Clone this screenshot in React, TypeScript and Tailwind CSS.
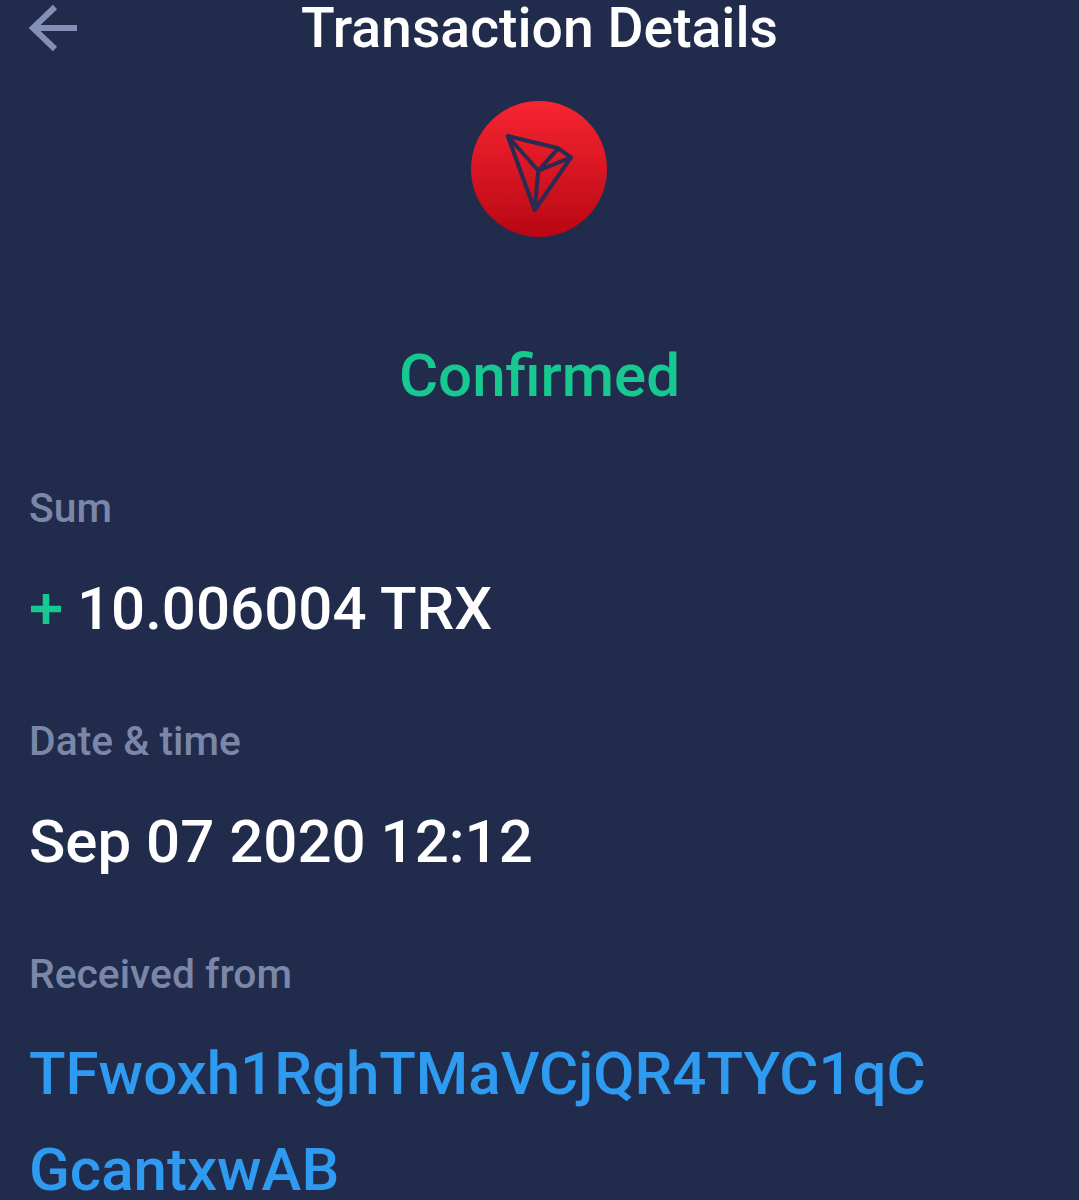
export default function App() {
  const font = { fontFamily: "Roboto, sans-serif" };
  return (
    <div style={font} className="h-[1200px] w-[1079px] overflow-hidden bg-[#212c4d]">
      <header className="relative flex h-[58px] items-center justify-center">
        <svg className="absolute left-[28px] top-[3px]" width="50" height="50" viewBox="0 0 50 50" fill="none">
          <path d="M27 4 L5 25 L27 46 M5 25 H49" stroke="#8490b5" strokeWidth="6" />
        </svg>
        <h1 className="text-[55.3px] font-medium leading-[58px] text-white">Transaction Details</h1>
      </header>
      <div className="mt-[43px] flex justify-center pr-[2px]">
        <div className="h-[136px] w-[136px] rounded-full bg-gradient-to-b from-[#f92432] to-[#b80612]">
          <svg width="136" height="136" viewBox="0 0 136 136" fill="none" stroke="#2a2b52" strokeWidth="4" strokeLinejoin="round">
            <path d="M36.7 35 L87.3 47.3 L100 56.3 L63.7 109 Z" />
            <path d="M36.7 35 L67.3 69.7 L63.7 109 M67.3 69.7 L87.3 47.3 M67.3 69.7 L100 56.3" />
          </svg>
        </div>
      </div>
      <div className="mt-[106px] text-center text-[60px] font-medium leading-[66px] text-[#17c990]">Confirmed</div>
      <section className="mt-[77px] px-[29px]">
        <div className="text-[40.8px] font-medium leading-[44px] text-[#7b87a8]">Sum</div>
        <div className="mt-[49px] flex h-[60px] items-center text-[60px] font-medium leading-[60px] text-white">
          <svg className="ml-px mr-[15px]" width="32" height="32" viewBox="0 0 32 32">
            <path d="M16 1 V31 M1 16 H31" stroke="#17c990" strokeWidth="6.5" />
          </svg>
          <span>10.006004 TRX</span>
        </div>
        <div className="mt-[80px] text-[40.8px] font-medium leading-[44px] text-[#7b87a8]">Date &amp; time</div>
        <div className="mt-[49px] text-[60px] font-medium leading-[60px] text-white">Sep 07 2020 12:12</div>
        <div className="mt-[80px] text-[40.8px] font-medium leading-[44px] text-[#7b87a8]">Received from</div>
        <div className="mt-[48px] w-[920px] break-all text-[60px] font-medium leading-[96px] text-[#2f9bf0] -translate-y-[18px]">TFwoxh1RghTMaVCjQR4TYC1qCGcantxwAB</div>
      </section>
    </div>
  );
}
